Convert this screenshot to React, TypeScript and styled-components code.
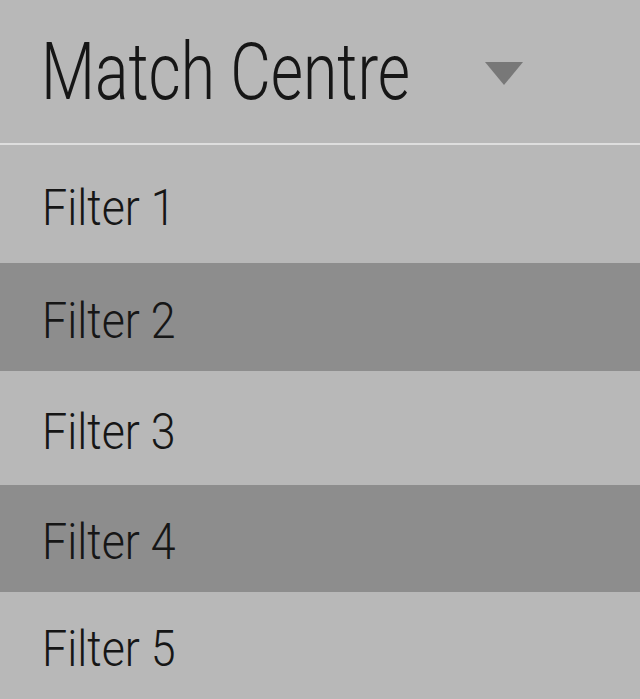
import React from "react";
import styled, { createGlobalStyle } from "styled-components";

const GlobalStyle = createGlobalStyle`
  html, body {
    margin: 0;
    padding: 0;
    background: #b8b8b8;
  }
  body {
    font-family: Roboto, "DejaVu Sans Condensed", sans-serif;
    font-weight: 300;
    color: #161616;
  }
`;

const Page = styled.div`
  width: 640px;
  height: 699px;
  overflow: hidden;
  display: flex;
  flex-direction: column;
  background: #b8b8b8;
`;

const Header = styled.div`
  height: 145px;
  flex: 0 0 auto;
  box-sizing: border-box;
  border-bottom: 2px solid #dedede;
  display: flex;
  align-items: center;
  gap: 74px;
  padding-left: 41px;
  padding-top: 2px;
`;

const Title = styled.h1`
  margin: 0;
  width: 370px;
  white-space: nowrap;
  font-size: 79px;
  font-weight: 300;
  line-height: 1;
  color: #161616;
`;

const Narrow = styled.span<{ $scale: number }>`
  display: inline-block;
  transform: scaleX(${(p) => p.$scale});
  transform-origin: left center;
`;

const Caret = styled.span`
  width: 0;
  height: 0;
  border-left: 19px solid transparent;
  border-right: 19px solid transparent;
  border-top: 23px solid #787878;
  margin-top: 2px;
`;

const List = styled.ul`
  list-style: none;
  margin: 0;
  padding: 0;
  display: flex;
  flex-direction: column;
`;

const Row = styled.li<{ $dark: boolean; $h: number }>`
  height: ${(p) => p.$h}px;
  box-sizing: border-box;
  display: flex;
  align-items: center;
  padding-left: 42px;
  padding-top: 7px;
  background: ${(p) => (p.$dark ? "#8d8d8d" : "#b8b8b8")};
  font-size: 50px;
  line-height: 1;
  white-space: nowrap;
  color: #161616;
`;

const filters = [
  { label: "Filter 1", h: 118 },
  { label: "Filter 2", h: 108 },
  { label: "Filter 3", h: 114 },
  { label: "Filter 4", h: 107 },
  { label: "Filter 5", h: 107 },
];

export default function App() {
  return (
    <>
      <GlobalStyle />
      <Page>
        <Header>
          <Title>
            <Narrow $scale={0.79}>Match Centre</Narrow>
          </Title>
          <Caret />
        </Header>
        <List>
          {filters.map((f, i) => (
            <Row key={f.label} $dark={i % 2 === 1} $h={f.h}>
              <Narrow $scale={0.895}>{f.label}</Narrow>
            </Row>
          ))}
        </List>
      </Page>
    </>
  );
}
